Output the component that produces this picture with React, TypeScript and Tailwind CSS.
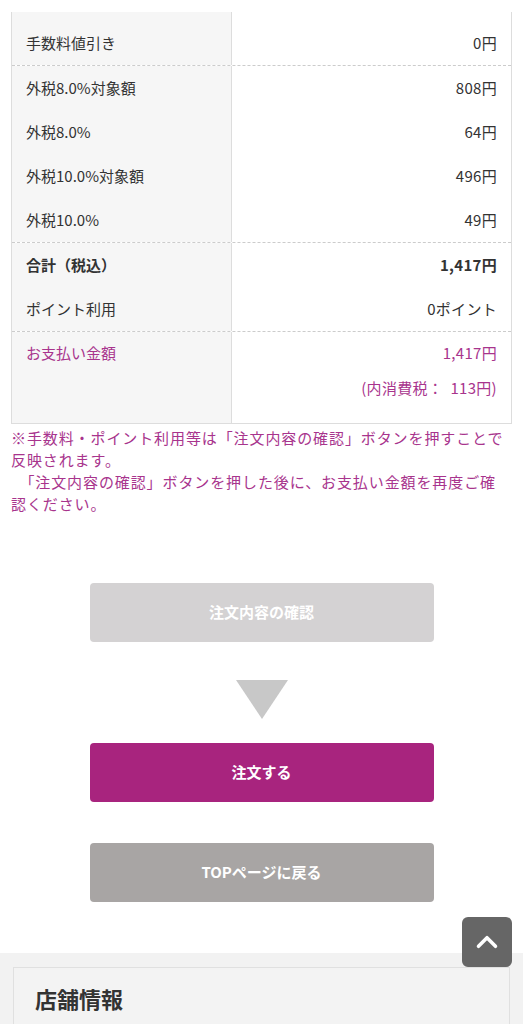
import { ChevronUp } from 'lucide-react';

type Row = {
  label: string;
  value: string;
  bold?: boolean;
};

const groups: Row[][] = [
  [{ label: '手数料値引き', value: '0円' }],
  [
    { label: '外税8.0%対象額', value: '808円' },
    { label: '外税8.0%', value: '64円' },
    { label: '外税10.0%対象額', value: '496円' },
    { label: '外税10.0%', value: '49円' },
  ],
  [
    { label: '合計（税込）', value: '1,417円', bold: true },
    { label: 'ポイント利用', value: '0ポイント' },
  ],
];

function SummaryRow({ row }: { row: Row }) {
  return (
    <div className={`grid grid-cols-[220px_1fr] h-[44px] ${row.bold ? 'font-bold' : ''}`}>
      <div className="flex items-center bg-[#f6f6f6] border-r border-[#dddddd] pl-[14px]">{row.label}</div>
      <div className="flex items-center justify-end pr-[14px] tracking-[0.3px]">{row.value}</div>
    </div>
  );
}

export default function App() {
  return (
    <div
      className="relative min-h-[1024px] bg-white text-[15px] text-[#333333]"
      style={{ fontFamily: '"Noto Sans CJK JP", "Noto Sans", sans-serif' }}
    >
      <div className="px-[11px] pt-[12px]">
        <div className="border-x border-b border-[#dddddd]">
          {/* tail of the row above */}
          <div className="grid grid-cols-[220px_1fr] h-[9px]">
            <div className="bg-[#f6f6f6] border-r border-[#dddddd]" />
            <div />
          </div>

          {groups.map((rows, i) => (
            <div key={i} className={i > 0 ? 'border-t border-dashed border-[#cccccc]' : ''}>
              {rows.map((row) => (
                <SummaryRow key={row.label} row={row} />
              ))}
            </div>
          ))}

          <div className="grid grid-cols-[220px_1fr] border-t border-dashed border-[#cccccc] text-[#a8348d]">
            <div className="bg-[#f6f6f6] border-r border-[#dddddd] pl-[14px] pt-[10px]">
              <p className="leading-[22px]">お支払い金額</p>
            </div>
            <div className="flex flex-col items-end pr-[14px] pt-[10px] pb-[24px] gap-[13px] tracking-[0.3px]">
              <p className="leading-[22px]">1,417円</p>
              <p className="leading-[22px]">(内消費税：&nbsp; 113円)</p>
            </div>
          </div>
        </div>

        <p className="mt-[3px] pr-[6px] leading-[22px] tracking-[0.9px] text-[#a8348d]">
          ※手数料・ポイント利用等は「注文内容の確認」ボタンを押すことで反映されます。
          <br />
          {'\u3000「注文内容の確認」ボタンを押した後に、お支払い金額を再度ご確認ください。'}
        </p>
      </div>

      <div className="flex flex-col items-center pt-[68px] pb-[51px]">
        <button
          type="button"
          className="w-[344px] h-[59px] rounded-[4px] bg-[#d4d2d3] text-white font-bold"
        >
          注文内容の確認
        </button>
        <svg width="52" height="39" viewBox="0 0 52 39" className="mt-[38px]">
          <polygon points="0,0 52,0 26,39" fill="#c8c8c8" />
        </svg>
        <button
          type="button"
          className="mt-[24px] w-[344px] h-[59px] rounded-[4px] bg-[#a8247e] text-white font-bold"
        >
          注文する
        </button>
        <button
          type="button"
          className="mt-[41px] w-[344px] h-[59px] rounded-[4px] bg-[#a8a5a4] text-white font-bold"
        >
          TOPページに戻る
        </button>
      </div>

      <footer className="bg-[#f2f2f2] px-[13px] pt-[14px] pb-[40px]">
        <div className="border border-[#e0e0e0] bg-[#f3f3f3] px-[21px] pt-[13px] pb-[40px]">
          <h2 className="text-[22px] font-bold leading-[34px] text-[#333333]">店舗情報</h2>
        </div>
      </footer>

      <button
        type="button"
        aria-label="ページトップへ"
        className="absolute top-[917px] right-[11px] flex h-[50px] w-[50px] items-center justify-center rounded-[6px] bg-[#666666] text-white"
      >
        <ChevronUp size={34} strokeWidth={2.5} />
      </button>
    </div>
  );
}
